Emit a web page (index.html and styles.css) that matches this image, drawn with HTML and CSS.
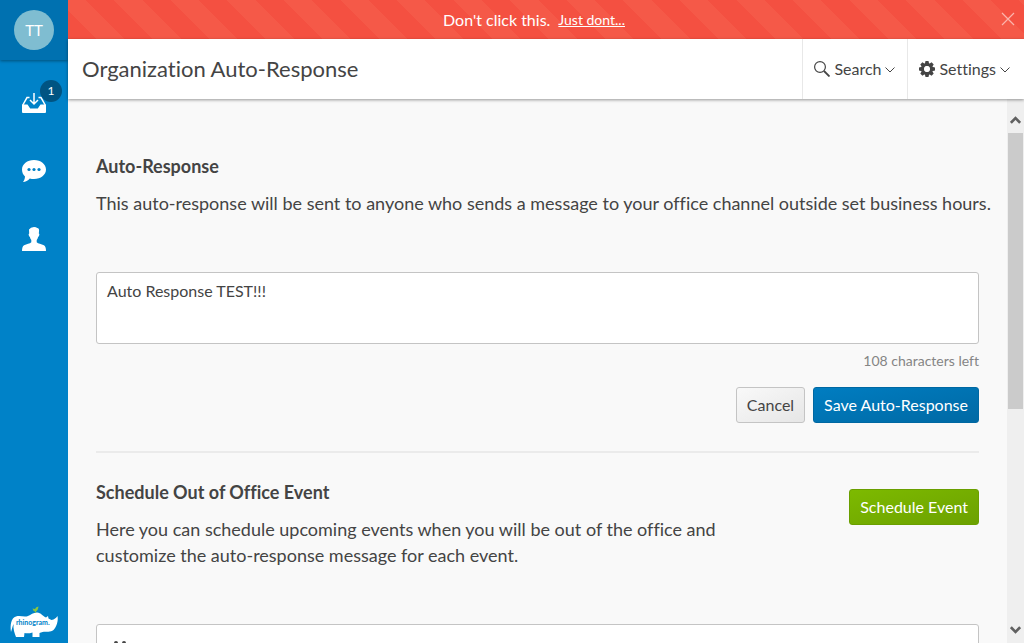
FILE: index.html
```html
<!DOCTYPE html>
<html lang="en">
<head>
<meta charset="utf-8">
<title>Organization Auto-Response</title>
<link rel="stylesheet" href="styles.css">
</head>
<body>
<div class="app">
  <nav class="sidebar" aria-label="Main">
    <div class="profile"><button class="avatar" type="button">TT</button></div>
    <a class="nav-item" href="#inbox" aria-label="Inbox">
      <svg width="24" height="22" viewBox="0 0 24 22" fill="none" stroke="#fff">
        <path d="M0 12.500h5.500l2.700 4h7.600l2.700-4H24V20q0 1-1 1H1q-1 0-1-1z" fill="#fff" stroke="none"/>
        <path d="M.8 13 5 5.600h2.500M23.200 13 19 5.600h-2.500" stroke-width="1.500"/>
        <path d="M12 1v10.500M8 8l4 4 4-4" stroke-width="1.500"/>
      </svg>
      <span class="badge">1</span>
    </a>
    <a class="nav-item" href="#messages" aria-label="Messages">
      <svg width="24" height="24" viewBox="0 0 24 24">
        <path d="M12 1c6.800 0 12 4.200 12 9.500S18.800 20 12 20c-1.500 0-2.900-.2-4.200-.6C6 21.500 3.500 22.700 1 23c1.200-1.400 1.900-3.300 2-5.400C1.100 15.800 0 13.300 0 10.500 0 5.200 5.200 1 12 1z" fill="#fff"/>
        <g fill="#0082c8"><circle cx="7" cy="10.500" r="1.600"/><circle cx="12" cy="10.500" r="1.600"/><circle cx="17" cy="10.500" r="1.600"/></g>
      </svg>
    </a>
    <a class="nav-item" href="#contacts" aria-label="Contacts">
      <svg width="24" height="24" viewBox="0 0 24 24">
        <path d="M7 2.500Q8.500 0 12 0q2.300 0 3.200 1 2.300.3 1.800 3.500l-.2 2q.8.3.5 1.600-.3 1.700-1.200 2-.4 1.900-1.400 3v2.200c1.300 1.500 4.800 1.700 7.200 2.900Q24 19.500 24 24H0q0-4.500 2.100-5.800c2.400-1.200 5.900-1.400 7.200-2.900v-2.200q-1-1.100-1.400-3-.9-.3-1.200-2-.3-1.300.5-1.600z" fill="#fff"/>
      </svg>
    </a>
    <a class="logo" href="#home" aria-label="rhinogram">
      <svg width="50" height="34" viewBox="0 0 50 34">
        <path d="M1 27C0 20 1 13 6 11.500c4-1.500 8 1 12-.5 3-1.200 5-3.500 9-3.500 4 0 6 4 9 5l2-1.500.5 2.500 3 1.500c3-.5 4.500-2 6-4 1 5-1 11-4 14-3 2.500-7 1.500-11 2l-3 1V32h-7v-4.500c-3 1-6 1-8 .5L14 32H6C4.500 28 3 24 3.500 19 2.500 21 2 24 1 27z" fill="#fff"/>
        <path d="M22.500 3.500 25 4q1-2.500 3.500-2.500-.5 4-2.500 5l-.5 1.500H25V6.500q-2-.5-2.500-3z" fill="#8bc53f"/>
        <text class="logo-text" x="6" y="20">rhinogram.</text>
      </svg>
    </a>
  </nav>
  <div class="page">
    <div class="alert" role="alert">
      <span>Don't click this.</span>
      <a class="alert-link" href="#dont">Just dont...</a>
      <button class="alert-close" type="button" aria-label="Close">
        <svg width="14" height="14" viewBox="0 0 14 14" fill="none" stroke="#fbb4ac" stroke-width="1.200"><path d="m1 1 12 12M13 1 1 13"/></svg>
      </button>
    </div>
    <header class="header">
      <h1 class="title">Organization Auto-Response</h1>
      <button class="menu" type="button">
        <svg width="16" height="16" viewBox="0 0 16 16" fill="none" stroke="#444"><circle cx="6" cy="6" r="5.400" stroke-width="1.200"/><path d="m10 10 5.500 5.500" stroke-width="1.800"/></svg>
        <span>Search</span>
        <svg class="chevron" width="10" height="6" viewBox="0 0 10 6" fill="none" stroke="#444"><path d="m.5.500 4.500 4.500L9.500.500"/></svg>
      </button>
      <button class="menu" type="button">
        <svg width="16" height="16" viewBox="-8 -8 16 16">
          <g fill="#444"><path id="tooth" d="M-1.500-8h3l.7 3h-4.400zM-1.500 8h3l.7-3h-4.400zM-8-1.500v3l3 .7v-4.400zM8-1.500v3l-3 .7v-4.400z"/><use href="#tooth" transform="rotate(45)"/></g>
          <circle r="4.400" fill="none" stroke="#444" stroke-width="3"/>
          <circle r="2.900" fill="#fff"/>
        </svg>
        <span>Settings</span>
        <svg class="chevron" width="10" height="6" viewBox="0 0 10 6" fill="none" stroke="#444"><path d="m.5.500 4.500 4.500L9.500.500"/></svg>
      </button>
    </header>
    <div class="body">
      <main class="content">
        <section>
          <h2 class="heading"><label for="response">Auto-Response</label></h2>
          <p class="text text-line">This auto-response will be sent to anyone who sends a message to your office channel outside set business hours.</p>
          <textarea class="response" id="response">Auto Response TEST!!!</textarea>
          <p class="hint">108 characters left</p>
          <div class="actions">
            <button class="button" type="button">Cancel</button>
            <button class="button button-primary" type="button">Save Auto-Response</button>
          </div>
        </section>
        <section class="schedule">
          <div class="schedule-row">
            <div class="schedule-info">
              <h2 class="heading">Schedule Out of Office Event</h2>
              <p class="text">Here you can schedule upcoming events when you will be out of the office and customize the auto-response message for each event.</p>
            </div>
            <button class="button button-green" type="button">Schedule Event</button>
          </div>
          <div class="event">
            <svg width="24" height="24" viewBox="0 0 24 24" fill="#444"><path d="M4 2a2 2 0 0 1 4 0v3H4zM12 2a2 2 0 0 1 4 0v3h-4zM0 4h20v18H0zm2 5v11h16V9z" fill-rule="evenodd"/></svg>
          </div>
        </section>
      </main>
      <div class="scrollbar" aria-hidden="true">
        <svg width="11" height="8" viewBox="0 0 11 8" fill="none" stroke="#606060" stroke-width="2.600"><path d="m.9 6.800 4.600-4.600 4.600 4.600"/></svg>
        <div class="track"><div class="thumb"></div></div>
        <svg width="11" height="8" viewBox="0 0 11 8" fill="none" stroke="#606060" stroke-width="2.600"><path d="m.9 1.200 4.600 4.600 4.600-4.600"/></svg>
      </div>
    </div>
  </div>
</div>
</body>
</html>
```
FILE: styles.css
```css
* { box-sizing: border-box; }
body { margin: 0; color: #444; font: 16px/24px Lato, sans-serif; font-variant-ligatures: none; }
h1, h2, p { margin: 0; }
button { font: inherit; color: inherit; cursor: pointer; }
svg { display: block; flex: none; }
.app { display: flex; height: 100vh; overflow: hidden; }
.sidebar { display: flex; flex-direction: column; flex: none; width: 68px; background: #0082c8; }
.profile { display: flex; justify-content: center; align-items: center; height: 60px; background: #0071b0; box-shadow: 0 1px 3px rgba(0, 0, 0, .4); }
.avatar { width: 40px; height: 40px; padding: 0; border: 0; border-radius: 50%; background: #7fbdd1; color: #fff; font-size: 15px; }
.nav-item { position: relative; display: flex; justify-content: center; align-items: center; height: 68px; }
.profile + .nav-item { margin-top: 9px; }
.badge { position: absolute; top: 11px; right: 6px; width: 22px; height: 22px; border-radius: 50%; background: #005482; color: #fff; font-size: 12px; line-height: 22px; text-align: center; }
.logo { margin: auto 0 4px 10px; }
.logo-text { fill: #0082c8; font: bold 7px Lato, sans-serif; }
.page { display: flex; flex: 1; flex-direction: column; min-width: 0; }
.alert { position: relative; display: flex; justify-content: center; align-items: center; gap: 8px; height: 39px; flex: none; padding-right: 24px; background: repeating-linear-gradient(45deg, #f45041 0 20px, #f55948 20px 40px); color: #fff; }
.alert-link { color: #fff; font-size: 14px; }
.alert-close { position: absolute; top: 12px; right: 9px; padding: 0; border: 0; background: none; }
.header { position: relative; z-index: 1; display: flex; flex: none; height: 60px; background: #fff; box-shadow: 0 1px 3px rgba(0, 0, 0, .4); }
.title { flex: 1; padding-left: 14px; font-size: 22px; line-height: 60px; font-weight: 400; }
.menu { display: flex; align-items: center; gap: 4px; padding: 0 12px 0 11px; border: 0; border-left: 1px solid #e8e8e8; background: none; }
.menu:last-child { padding-right: 14px; }
.chevron { margin-top: 2px; }
.body { display: flex; flex: 1; min-height: 0; background: #f9f9f9; }
.content { flex: 1; min-width: 0; padding: 54px 28px 0; overflow: hidden; }
.heading { font-size: 18px; line-height: 26px; font-weight: 700; }
.text { margin-top: 11px; font-size: 18px; line-height: 26px; }
.text-line { white-space: nowrap; }
.response { display: block; width: 100%; height: 72px; margin-top: 56px; padding: 6px 10px; border: 1px solid #c4c4c4; border-radius: 3px; background: #fff; color: inherit; font: inherit; resize: none; }
.hint { margin-top: 7px; color: #858585; font-size: 14px; line-height: 20px; text-align: right; }
.actions { display: flex; justify-content: flex-end; gap: 8px; margin-top: 16px; }
.button { flex: none; height: 36px; padding: 0 10px; border: 1px solid #c4c4c4; border-radius: 3px; background: linear-gradient(to bottom right, #f9f9f9, #e6e6e6); }
.button-primary { border-color: #0068a2; background: linear-gradient(to bottom right, #007dc1, #0069a4); color: #fff; }
.button-green { margin-top: 10px; border-color: #6a9f00; background: linear-gradient(to bottom right, #7dba00, #6ca100); color: #fff; }
.schedule { margin-top: 28px; padding-top: 26px; border-top: 2px solid #ebebeb; }
.schedule-row { display: flex; justify-content: space-between; align-items: flex-start; }
.schedule-info { width: 72%; }
.event { height: 72px; margin-top: 56px; padding: 16px 13px; border: 1px solid #c4c4c4; border-radius: 3px; background: #fff; }
.scrollbar { display: flex; flex: none; flex-direction: column; align-items: center; width: 17px; padding: 17px 0 9px; background: #efefef; }
.track { flex: 1; align-self: stretch; padding: 9px 1px; }
.thumb { height: 57%; background: #cbcbcb; }
```
